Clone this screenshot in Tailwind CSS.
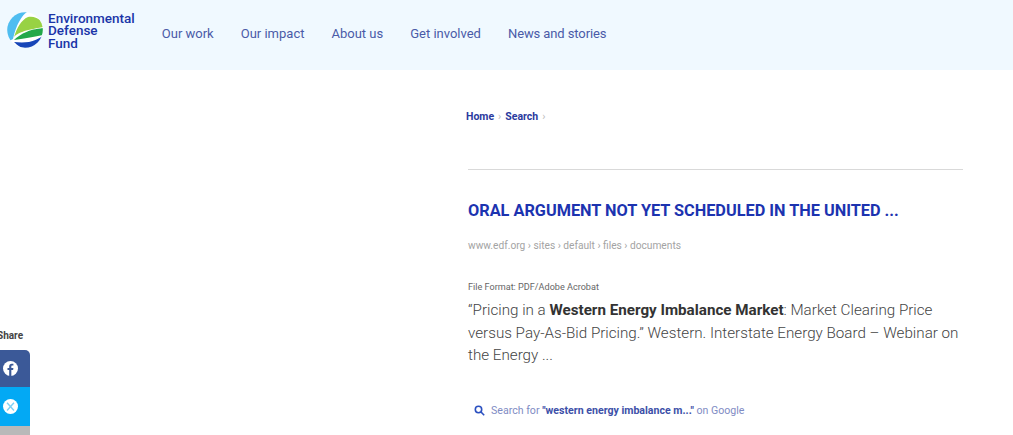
<!DOCTYPE html>
<html lang="en">
<head>
  <meta charset="UTF-8" />
  <meta name="viewport" content="width=device-width, initial-scale=1.0"/>
  <title>Search | Environmental Defense Fund</title>
  <script src="https://cdn.jsdelivr.net/npm/@tailwindcss/browser@4"></script>
</head>
<body class="relative h-[435px] overflow-hidden bg-white font-['Roboto',sans-serif]">

  <!-- Header -->
  <header class="h-[70px] bg-[#f0f9ff] flex items-center">
    <a class="ml-[7px] flex items-center gap-[5px] mb-[10px]">
      <svg width="36" height="36" viewBox="0 0 36 36">
        <defs><clipPath id="logoClip"><circle cx="18" cy="18" r="17.8"/></clipPath></defs>
        <g clip-path="url(#logoClip)">
          <rect width="36" height="36" fill="#fff"/>
          <path d="M0 0h20C15 3 9 13 6 27L0 30z" fill="#4fbdf0"/>
          <path d="M36 10C30 5 25 4 21 5 14 8 10 16 7 25 12 20 16 19 36 15z" fill="#98d243"/>
          <path d="M36 16c-8 1-12 2-16 3.700C14 22 10 25 7 28c5-1 9-1 13-2 6-1 11-2 16-3z" fill="#22a84a"/>
          <path d="M36 24c-5 3-9 5-14 6-5 .6-10 .5-15 0 3 3 7 6 11 6h18z" fill="#1746b8"/>
        </g>
      </svg>
      <span class="text-[13.500px] leading-[12.500px] font-medium text-[#1a35a8] mt-px">Environmental<br/>Defense<br/>Fund</span>
    </a>
    <nav class="ml-[27px] flex gap-[27px] text-[13px] text-[#4a5ba8] mb-[3px]">
      <a>Our work</a>
      <a>Our impact</a>
      <a>About us</a>
      <a>Get involved</a>
      <a class="tracking-[-0.1px]">News and stories</a>
    </nav>
  </header>

  <!-- Results -->
  <main class="ml-[468px] w-[495px]">
    <div class="pt-[40px] h-[100px] border-b border-[#d9d9d9]">
      <div class="-ml-[2px] flex items-start gap-[4px] text-[10.500px] font-bold text-[#2b3a9e] leading-[14px]">
        <a>Home</a><span class="text-[#bbb] font-normal">›</span><a>Search</a><span class="text-[#bbb] font-normal">›</span>
      </div>
    </div>
    <h2 class="mt-[31px] text-[16.300px] leading-[20px] font-bold text-[#1c33b0]">ORAL ARGUMENT NOT YET SCHEDULED IN THE UNITED ...</h2>
    <p class="mt-[18px] text-[10.200px] leading-[14px] text-[#a3a3a3]">www.edf.org › sites › default › files › documents</p>
    <p class="mt-[27px] text-[9.100px] leading-[14px] text-[#666]">File Format: PDF/Adobe Acrobat</p>
    <p class="mt-[5px] text-[15.200px] leading-[22.500px] text-[#444] font-light">“Pricing in a <b class="font-bold text-[#333]">Western Energy Imbalance Market</b>: Market Clearing Price versus Pay-As-Bid Pricing.” Western. Interstate Energy Board – Webinar on the Energy ...</p>
    <p class="mt-[37px] ml-[6px] flex items-center gap-[6px] text-[10.600px] leading-[14px] text-[#7f8cc4]">
      <svg width="11" height="11" viewBox="0 0 11 11" fill="none" stroke="#2b50c0" stroke-width="1.6"><circle cx="4.500" cy="4.500" r="3.200"/><path d="M7 7l3.200 3.200"/></svg>
      <span>Search for <b class="font-bold text-[#3c4fa8]">"western energy imbalance m..."</b> on Google</span>
    </p>
  </main>

  <!-- Share rail -->
  <aside class="absolute left-0 top-[329px] w-[30px]">
    <p class="-ml-[3px] text-[10px] leading-[14px] font-bold text-[#444]">Share</p>
    <div class="mt-[7px] overflow-hidden rounded-tr-[5px]">
      <a class="h-[37px] pr-[9px] bg-[#3b5998] flex items-center justify-center">
        <svg width="15" height="15" viewBox="0 0 16 16"><circle cx="8" cy="8" r="8" fill="#fff"/><path d="M8.900 16V9.600h1.900l.3-2.200H8.900V6c0-.7.3-1.100 1.100-1.100h1.100V3c-.4 0-1-.1-1.700-.1-1.800 0-2.800 1-2.800 2.800v1.700H4.800v2.200h1.800V16z" fill="#3b5998"/></svg>
      </a>
      <a class="h-[39px] pr-[9px] bg-[#03a9f4] flex items-center justify-center">
        <svg width="15" height="15" viewBox="0 0 16 16"><circle cx="8" cy="8" r="8" fill="#fff"/><path d="M4.300 4l7.400 8.200M11.700 4 4.300 12.200" stroke="#7fd0f5" stroke-width="1.500" fill="none"/></svg>
      </a>
      <a class="block h-[10px] bg-[#b9b9b9]"></a>
    </div>
  </aside>
</body>
</html>
